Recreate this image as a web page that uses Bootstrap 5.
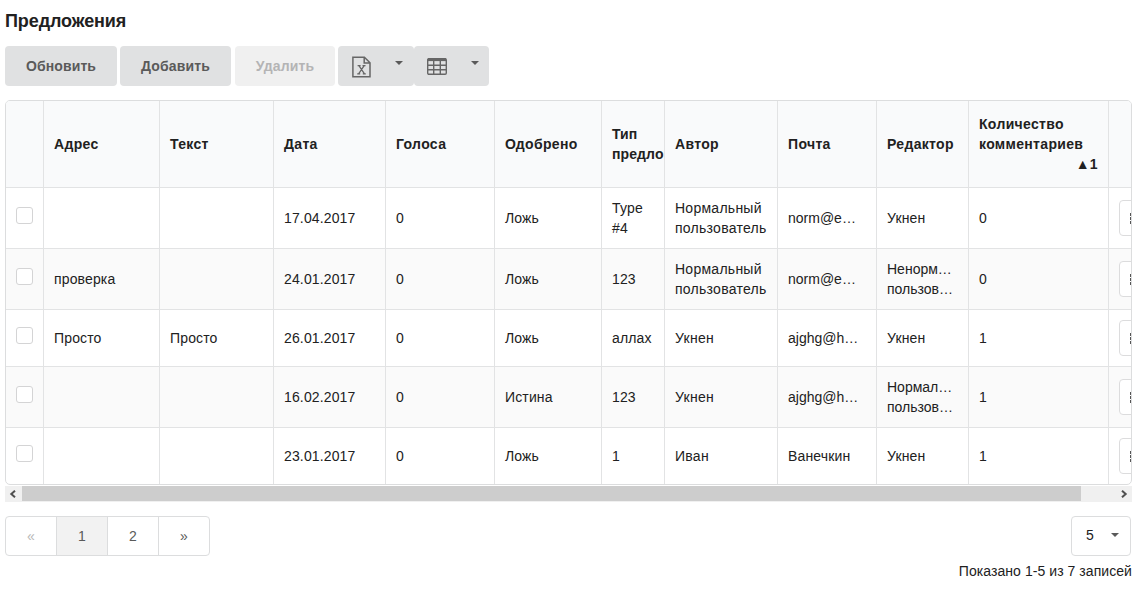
<!DOCTYPE html>
<html lang="ru">
<head>
<meta charset="utf-8">
<title>Предложения</title>
<meta name="viewport" content="width=device-width, initial-scale=1">
<link href="https://cdn.jsdelivr.net/npm/bootstrap@5.3.0/dist/css/bootstrap.min.css" rel="stylesheet">
<style>
body{font:14px/20px "Liberation Sans",Arial,sans-serif;color:#212121;letter-spacing:.14px;overflow:hidden}
.page{padding:11px 14px 0 5px}
.page-title{font-size:18px;line-height:21px;font-weight:700;letter-spacing:-.1px;margin:0 0 14px}
.tool{height:40px;background:#e0e1e2;color:#5a5a5a;font-weight:700;font-size:14px;line-height:20px;letter-spacing:.12px;border:0;border-radius:4px;padding:0}
.tool:disabled{background:#f0f0f0;color:#b4b4b5;opacity:1;border:0}
.w-refresh{width:112px;margin-right:3px}.w-add{width:111px;margin-right:4px}.w-del{width:100px;margin-right:3px}
.w-excel{width:76px;padding:1px 11px 0 13px}.w-cols{width:75px;padding:1px 10px 0 13px}
.tool svg{display:block}
.tri{width:0;height:0;border:4px solid transparent;border-top:4.5px solid #5a5a5a;border-bottom:0}
.grid-box{width:1127px;margin-top:14px;border:1px solid #dcddde;border-radius:5px;overflow:hidden}
.grid-box table{width:1172px;table-layout:fixed;border-collapse:separate;border-spacing:0}
.grid-box th,.grid-box td{padding:0 10px;border-left:1px solid #e2e3e4;border-top:1px solid #e2e3e4;vertical-align:middle;overflow:hidden}
.grid-box th{height:86px;border-top:0;background:#f9fafb;font-weight:700;letter-spacing:.33px}
.grid-box th.narrow,.grid-box td{padding-right:0}
.grid-box td{height:61px}
.grid-box td.person{letter-spacing:.26px}
.grid-box td.clipped{letter-spacing:0}
.grid-box tr.short td{height:57px}
.grid-box tr.even td{background:#fafafa}
.grid-box tr>:first-child{border-left:0}
.tick{width:17px;height:17px;border:1px solid #d4d4d5;border-radius:3px;background:#fff;margin-bottom:5px}
.more{width:36px;height:36px;border:1px solid #dcdcdd;border-radius:4px;background:#fff}
.more svg{display:block;margin:12px 0 0 10px}
.hbar{width:1127px;height:16px;margin-top:1px;background:#f0f0f0}
.hbar .thumb{width:1059px;height:15px;background:#cdcdcd}
.hbar .arr{width:17px;height:15px}
.foot{width:1126px;margin-top:14px}
.pages{border:1px solid #dcddde;border-radius:4px;height:40px;overflow:hidden}
.pages a{width:51px;color:#5a5a5a;text-decoration:none;border-left:1px solid #dcddde}
.pages a:first-child{width:50px;border-left:0;color:#b8b8b8}
.pages a.on{background:#f2f2f2}
.size-pick{width:60px;height:40px;border:1px solid #dcddde;border-radius:4px;padding:0 11px 2px 14px}
.total{width:1127px;margin-top:5px;letter-spacing:.06px}
</style>
</head>
<body>
<main class="page">
<h1 class="page-title">Предложения</h1>
<div class="d-flex">
<button class="btn tool w-refresh">Обновить</button>
<button class="btn tool w-add">Добавить</button>
<button class="btn tool w-del" disabled>Удалить</button>
<button class="btn tool w-excel d-flex align-items-center justify-content-between" aria-label="Excel">
<svg width="20" height="22" viewBox="0 0 20 22" fill="none" stroke="#666" stroke-width="1.5"><path d="M1.9 1.2H13.4L19 6.8V20.8H1.9zM13.2 1.2V7H19"/><path d="M6.6 9.7h3M11.5 9.7h3M6.2 17.8h3M11.8 17.8h3M7.9 9.7l5.6 8.1M13.2 9.7l-5.6 8.1" stroke-width="1.3"/></svg>
<span class="tri mb-2"></span></button>
<button class="btn tool w-cols d-flex align-items-center justify-content-between" aria-label="Столбцы">
<svg width="20" height="17" viewBox="0 0 20 17" fill="none" stroke="#666" stroke-width="1.4"><rect x=".7" y=".7" width="18.6" height="15.6" rx="1.2"/><path d="M1 1.6h18" stroke-width="3"/><path d="M1 7.3h18M1 11.7h18M6.7 2v14M13.3 2v14"/></svg>
<span class="tri mb-2"></span></button>
</div>
<div class="grid-box">
<table>
<colgroup><col style="width:37px"><col style="width:116px"><col style="width:114px"><col style="width:112px"><col style="width:109px"><col style="width:107px"><col style="width:63px"><col style="width:113px"><col style="width:99px"><col style="width:92px"><col style="width:140px"><col style="width:70px"></colgroup>
<thead><tr><th></th><th>Адрес</th><th>Текст</th><th>Дата</th><th>Голоса</th><th>Одобрено</th><th class="narrow text-nowrap" style="letter-spacing:.1px">Тип<br>предло</th><th>Автор</th><th>Почта</th><th>Редактор</th><th>Количество комментариев<div class="text-end">▲1</div></th><th></th></tr></thead>
<tbody id="rows"></tbody>
</table>
</div>
<div class="hbar d-flex">
<span class="arr d-flex align-items-center justify-content-center pe-1"><svg width="8" height="8" viewBox="0 0 8 8" fill="none" stroke="#505050" stroke-width="2"><path d="M7 .7 3.3 4 7 7.3"/></svg></span>
<span class="thumb"></span>
<span class="arr d-flex align-items-center justify-content-center ms-auto"><svg width="8" height="8" viewBox="0 0 8 8" fill="none" stroke="#505050" stroke-width="2"><path d="M2 .7 5.7 4 2 7.3"/></svg></span>
</div>
<div class="foot d-flex justify-content-between">
<nav class="pages d-flex"><a class="d-flex align-items-center justify-content-center">«</a><a class="on d-flex align-items-center justify-content-center">1</a><a class="d-flex align-items-center justify-content-center">2</a><a class="d-flex align-items-center justify-content-center">»</a></nav>
<div class="size-pick d-flex align-items-center justify-content-between"><span>5</span><span class="tri"></span></div>
</div>
<div class="total text-end">Показано 1-5 из 7 записей</div>
</main>
<script>
const data = [
 ['','','17.04.2017','0','Ложь','Type<br>#4','Нормальный<br>пользователь','norm@e…','Укнен','0'],
 ['проверка','','24.01.2017','0','Ложь','123','Нормальный<br>пользователь','norm@e…','Ненорм…<br>пользов…','0'],
 ['Просто','Просто','26.01.2017','0','Ложь','аллах','Укнен','ajghg@h…','Укнен','1'],
 ['','','16.02.2017','0','Истина','123','Укнен','ajghg@h…','Нормал…<br>пользов…','1'],
 ['','','23.01.2017','0','Ложь','1','Иван','Ванечкин','Укнен','1']
];
const dots = '<svg width="14" height="12" fill="#555"><path d="M0 0h3v3H0zM0 4h3v3H0zM0 8h3v3H0zM5 0h9v3H5zM5 4h9v3H5zM5 8h9v3H5z"/></svg>';
document.getElementById('rows').innerHTML = data.map((r, i) =>
 `<tr class="${i % 2 ? 'even' : ''} ${r.join().includes('<br>') ? '' : 'short'}"><td><div class="tick"></div></td>` +
 r.map((c, k) => `<td class="text-nowrap ${k === 6 ? 'person' : c.includes('…') ? 'clipped' : ''}">${c}</td>`).join('') + `<td><div class="more">${dots}</div></td></tr>`).join('');
</script>
<script src="https://cdn.jsdelivr.net/npm/bootstrap@5.3.0/dist/js/bootstrap.bundle.min.js"></script>
</body>
</html>
